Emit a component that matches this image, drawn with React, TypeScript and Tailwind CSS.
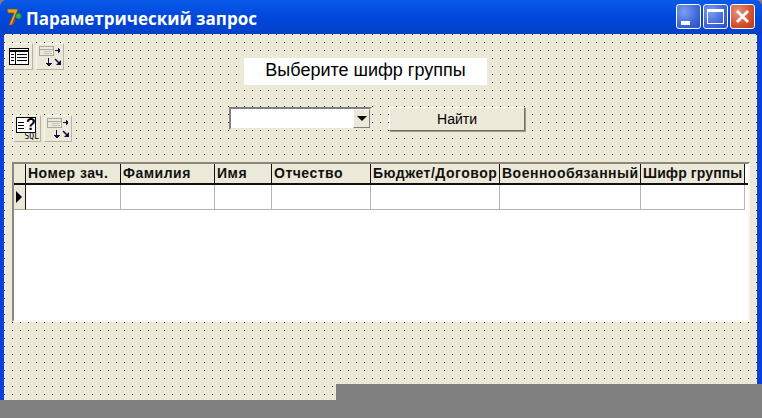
const GRID_COLS = "grid-cols-[12px_95px_94px_57px_99px_129px_141px_104px]"
const COLUMNS = ["Номер зач.", "Фамилия", "Имя", "Отчество", "Бюджет/Договор", "Военнообязанный", "Шифр группы"]

const RAISED = "border border-t-[#f7f6ef] border-l-[#f7f6ef] border-r-[#b5b3a4] border-b-[#b5b3a4]"

function ArrowsIcon() {
  return (
    <svg width="24" height="22" viewBox="0 0 24 22" shapeRendering="crispEdges">
      <rect x="1.5" y="0.5" width="14" height="9" fill="#ece9d8" stroke="#a8a8a0" />
      <path d="M2 3.5h13" stroke="#a8a8a0" />
      <path d="M6 5.5h8M6 7.5h8" stroke="#c4c2b4" />
      <path d="M17 4.5h5M20 2v5M21 3v3" stroke="#10104a" />
      <path d="M10.5 12v8M8 17.5h6M9 18.5h4M10 19.5h2" stroke="#10104a" />
      <path d="M17 13l5 5" stroke="#10104a" strokeWidth="1.6" shapeRendering="auto" />
      <path d="M18 19h5v-5z" fill="#10104a" shapeRendering="auto" />
    </svg>
  )
}

function TableIcon() {
  return (
    <svg width="20" height="17" viewBox="0 0 20 17" shapeRendering="crispEdges">
      <rect x="0.5" y="0.5" width="19" height="16" fill="#fff" stroke="#000" />
      <path d="M1 3h18" stroke="#000" strokeWidth="2" />
      <path d="M6.5 4v12" stroke="#000" />
      <path d="M2 6.5h3M8 6.5h10M2 9.5h3M8 9.5h10M2 12.5h3M8 12.5h10" stroke="#000" />
    </svg>
  )
}

function SqlIcon() {
  return (
    <div className="flex h-[24px] w-[24px] flex-col">
      <div className="ml-px flex h-[16px] w-[20px] shrink-0 overflow-hidden border border-black bg-white">
        <div className="w-[9px] shrink-0 pl-[1px] pt-[4px]">
          <div className="h-px w-[6px] bg-black" />
          <div className="mt-[2px] h-px w-[6px] bg-black" />
          <div className="mt-[2px] h-px w-[6px] bg-black" />
        </div>
        <span className="font-['Liberation_Sans',sans-serif] text-[16px] font-bold leading-[14px] text-black">?</span>
      </div>
      <span className="self-end font-['DejaVu_Sans_Mono',monospace] text-[8px] leading-[8px] text-black">SQL</span>
    </div>
  )
}

function DelphiLogo() {
  return (
    <svg width="18" height="20" viewBox="0 0 18 20">
      <path d="M1 2h11l-1 3-5 13H3l5-12H2z" fill="#e8a020" stroke="#7a4a08" strokeWidth="0.7" />
      <circle cx="12.5" cy="9" r="3" fill="#3fae5a" stroke="#0c6b3a" strokeWidth="0.8" />
      <path d="M9 13l-2 4" stroke="#b33a1a" strokeWidth="1.5" />
    </svg>
  )
}

function ToolButton({ children }: { children: React.ReactNode }) {
  return (
    <div className={`flex h-[27px] w-[28px] shrink-0 items-center justify-center bg-[#ece9d8] ${RAISED}`}>
      {children}
    </div>
  )
}

function CaptionButton({ kind }: { kind: "min" | "max" | "close" }) {
  const bg =
    kind === "close"
      ? "bg-[radial-gradient(circle_at_30%_30%,#e9937a,#d4502c_60%,#b8381a)]"
      : "bg-[radial-gradient(circle_at_30%_30%,#7d9ff0,#3f67d8_60%,#2a4bc4)]"
  return (
    <div className={`flex h-[25px] w-[25px] items-center justify-center rounded-[3px] border border-white ${bg}`}>
      {kind === "min" && <div className="mt-[12px] ml-[-6px] h-[4px] w-[9px] bg-white" />}
      {kind === "max" && (
        <div className="h-[15px] w-[17px] border border-white border-t-[3px]" />
      )}
      {kind === "close" && (
        <svg width="15" height="15" viewBox="0 0 15 15">
          <path d="M2 2l11 11M13 2L2 13" stroke="#fff" strokeWidth="2.8" />
        </svg>
      )}
    </div>
  )
}

export default function App() {
  return (
    <div className="h-[418px] w-[762px] overflow-hidden bg-[#808080]">
      <div className="flex h-[384px] w-[762px] flex-col rounded-t-[7px] bg-[#0a3fd8]">
        <div className="flex h-[34px] shrink-0 items-center rounded-t-[7px] bg-gradient-to-b from-[#0a5ae8] via-[#0047dc] to-[#0440c8] pl-[6px] pr-[7px]">
          <DelphiLogo />
          <span className="ml-[2px] mt-[3px] font-['Open_Sans',sans-serif] text-[17px] font-bold leading-none text-white">
            Параметрический запрос
          </span>
          <div className="ml-auto flex gap-[2px] pb-px">
            <CaptionButton kind="min" />
            <CaptionButton kind="max" />
            <CaptionButton kind="close" />
          </div>
        </div>

        <div className="ml-[4px] mr-[5px] flex-1 bg-[#ece9d8] bg-[conic-gradient(at_1px_1px,transparent_270deg,#333_0)] bg-[size:8px_8px] bg-[position:0px_0px]">
          <div className="flex items-start pl-px pt-[9px]">
            <div className="flex gap-[3px]">
              <ToolButton><TableIcon /></ToolButton>
              <ToolButton><ArrowsIcon /></ToolButton>
            </div>
            <div className="ml-[180px] mt-[15px] flex h-[27px] w-[243px] items-center justify-center bg-white pb-[2px] font-['Liberation_Sans',sans-serif] text-[18px] text-black">
              Выберите шифр группы
            </div>
          </div>

          <div className="mt-[22px] flex items-start pl-[9px]">
            <div className="mt-[8px] flex gap-[3px]">
              <ToolButton><SqlIcon /></ToolButton>
              <ToolButton><ArrowsIcon /></ToolButton>
            </div>
            <div className="ml-[157px] flex h-[23px] w-[143px] items-center border-2 border-t-[#808080] border-l-[#808080] border-r-[#ece9d8] border-b-[#ece9d8] bg-white p-0">
              <div className="ml-auto flex h-[19px] w-[17px] items-center justify-center border border-t-white border-l-white border-r-[#808080] border-b-[#808080] bg-[#ece9d8]">
                <div className="h-0 w-0 border-x-[5px] border-t-[5px] border-x-transparent border-t-black" />
              </div>
            </div>
            <div className="ml-[17px] flex h-[24px] w-[136px] items-center justify-center border border-t-white border-l-white border-r-[#716f64] border-b-[#716f64] bg-[#ece9d8] font-['Liberation_Sans',sans-serif] text-[14px] text-black shadow-[1px_1px_0_#9d9b8c]">
              Найти
            </div>
          </div>

          <div className="ml-[8px] mt-[20px] h-[160px] w-[738px] border-2 border-t-[#8a887a] border-l-[#8a887a] border-r-[#f8f7f0] border-b-[#f8f7f0] bg-white">
            <div className={`grid h-[21px] ${GRID_COLS} border-b-2 border-b-[#111]`}>
              <div className="border-r border-r-[#111] bg-[#ece9d8]" />
              {COLUMNS.map((name) => (
                <div
                  key={name}
                  className={`overflow-hidden whitespace-nowrap border-r border-r-[#111] bg-[#ece9d8] pl-[2px] font-['Liberation_Sans',sans-serif] text-[14px] font-bold leading-[19px] text-[#111] ${
                    name === "Шифр группы" ? "tracking-[0.1px]" : "tracking-[0.5px]"
                  }`}
                >
                  {name}
                </div>
              ))}
            </div>
            <div className={`grid h-[25px] ${GRID_COLS}`}>
              <div className="flex items-center border-b border-r border-b-[#aca899] border-r-[#111] bg-[#ece9d8] pl-[2px]">
                <div className="h-0 w-0 border-y-[6px] border-l-[6px] border-y-transparent border-l-black" />
              </div>
              {COLUMNS.map((name) => (
                <div key={name} className="border-b border-r border-[#b8b6aa] bg-white" />
              ))}
            </div>
          </div>
        </div>
      </div>

      <div className="h-[16px] w-[336px] bg-[#0a3fd8] pl-[4px]">
        <div className="h-full bg-[#ece9d8] bg-[conic-gradient(at_1px_1px,transparent_270deg,#333_0)] bg-[size:8px_8px] bg-[position:0px_2px]" />
      </div>
    </div>
  )
}
